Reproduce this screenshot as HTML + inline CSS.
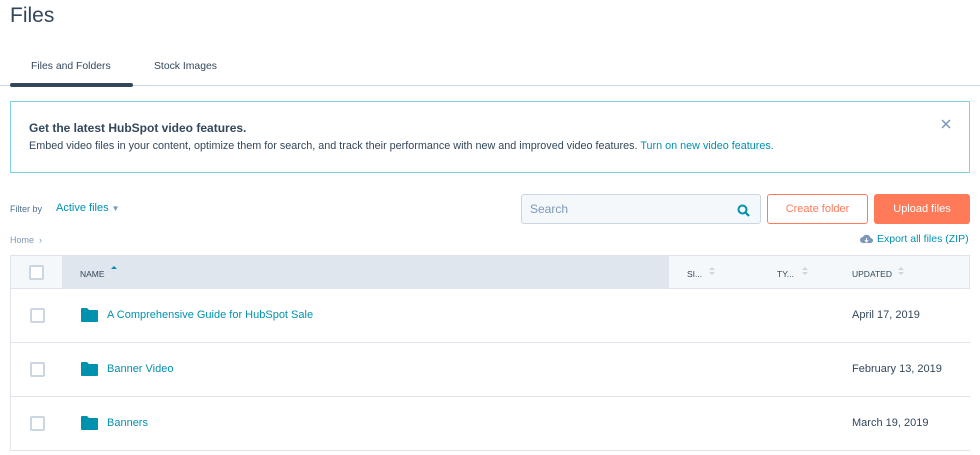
<!DOCTYPE html>
<html><head><meta charset="utf-8"><style>
*{box-sizing:border-box;margin:0;padding:0}
body{width:980px;height:455px;overflow:hidden;background:#fff;font-family:"Liberation Sans",sans-serif;color:#33475b;position:relative}
.a{position:absolute}
.t{font-size:11px}
.link{color:#0091ae}
.cb{position:absolute;width:15px;height:15px;border:2px solid #cbd6e2;border-radius:2px;background:#fff}
.row{position:absolute;left:10px;width:960px;height:54px;border-left:1px solid #dfe3eb;border-bottom:1px solid #dfe3eb}
.fold{position:absolute;left:70px;top:19px;width:17px;height:14px}
.name{position:absolute;left:96px;top:20px;font-size:11px;color:#0091ae}
.date{position:absolute;left:841px;top:20px;font-size:11px}
</style></head><body>
<div class="a" style="left:10px;top:4px;font-size:21px;color:#33475b">Files</div>
<div class="a" style="left:31px;top:61px;font-size:10.4px">Files and Folders</div>
<div class="a" style="left:154px;top:61px;font-size:10.4px">Stock Images</div>
<div class="a" style="left:0;top:85px;width:980px;height:1px;background:#cbd6e2"></div>
<div class="a" style="left:10px;top:83px;width:123px;height:4px;border-radius:2px;background:#33475b"></div>

<div class="a" style="left:10px;top:101px;width:960px;height:72px;border:1px solid #7fd1de;background:#fff"></div>
<div class="a" style="left:29px;top:121px;font-size:12px;font-weight:bold">Get the latest HubSpot video features.</div>
<div class="a" style="left:29px;top:140px;font-size:10.8px">Embed video files in your content, optimize them for search, and track their performance with new and improved video features. <span class="link">Turn on new video features.</span></div>
<svg class="a" style="left:941px;top:119px" width="10" height="10"><path d="M1 1L9 9M9 1L1 9" stroke="#7c98b6" stroke-width="1.5"/></svg>

<div class="a" style="left:10px;top:204px;font-size:9px;color:#516f90">Filter by</div>
<div class="a link" style="left:56px;top:202px;font-size:11px">Active files <span style="font-size:8px;color:#7c98b6">▼</span></div>

<div class="a" style="left:521px;top:194px;width:240px;height:30px;border:1px solid #cbd6e2;border-radius:3px;background:#f5f8fa"></div>
<div class="a" style="left:530px;top:202px;font-size:12px;color:#7c98b6">Search</div>
<svg class="a" style="left:737px;top:204px" width="13" height="13"><circle cx="5.5" cy="5.5" r="4" fill="none" stroke="#0091ae" stroke-width="2"/><path d="M8.5 8.5L12 12" stroke="#0091ae" stroke-width="2.2"/></svg>
<div class="a" style="left:767px;top:194px;width:101px;height:30px;border:1px solid #ff7a59;border-radius:3px;background:#fff;color:#ff7a59;font-size:11px;text-align:center;line-height:28px">Create folder</div>
<div class="a" style="left:874px;top:194px;width:96px;height:30px;border-radius:3px;background:#ff7a59;color:#fff;font-size:11px;text-align:center;line-height:30px">Upload files</div>

<div class="a" style="left:10px;top:235px;font-size:9px;color:#7c98b6">Home &nbsp;›</div>
<svg class="a" style="left:860px;top:234px" width="13" height="10"><path d="M3 9a3 3 0 0 1 0-6 4 4 0 0 1 7.5 1A2.5 2.5 0 0 1 10.5 9z" fill="#7c98b6"/><path d="M6.5 4v4M4.8 6.2L6.5 8l1.7-1.8" stroke="#fff" stroke-width="1" fill="none"/></svg>
<div class="a link" style="left:877px;top:233px;font-size:10.5px">Export all files (ZIP)</div>

<div class="a" style="left:10px;top:255px;width:960px;height:34px;background:#f5f8fa;border:1px solid #dfe3eb"></div>
<div class="a" style="left:62px;top:256px;width:607px;height:33px;background:#dfe6ee"></div>
<div class="cb" style="left:29px;top:265px"></div>
<div class="a" style="left:80px;top:269px;font-size:8.5px;color:#33475b">NAME</div>
<svg class="a" style="left:111px;top:265px" width="6" height="10"><path d="M0 4L3 1L6 4z" fill="#0091ae"/><path d="M0 6L3 9L6 6z" fill="#dfe3eb"/></svg>
<div class="a" style="left:687px;top:269px;font-size:8.5px">SI...</div>
<svg class="a" style="left:709px;top:266px" width="6" height="10"><path d="M0 4L3 1L6 4zM0 6L3 9L6 6z" fill="#cbd6e2"/></svg>
<div class="a" style="left:777px;top:269px;font-size:8.5px">TY...</div>
<svg class="a" style="left:802px;top:266px" width="6" height="10"><path d="M0 4L3 1L6 4zM0 6L3 9L6 6z" fill="#cbd6e2"/></svg>
<div class="a" style="left:852px;top:269px;font-size:8.5px">UPDATED</div>
<svg class="a" style="left:898px;top:266px" width="6" height="10"><path d="M0 4L3 1L6 4zM0 6L3 9L6 6z" fill="#cbd6e2"/></svg>

<div class="row" style="top:289px"><div class="cb" style="left:19px;top:19px"></div><svg class="fold" viewBox="0 0 17 14"><path d="M1 0h5l2 2h8a1 1 0 0 1 1 1v10a1 1 0 0 1-1 1H1a1 1 0 0 1-1-1V1a1 1 0 0 1 1-1z" fill="#0091ae"/></svg><div class="name">A Comprehensive Guide for HubSpot Sale</div><div class="date">April 17, 2019</div></div>
<div class="row" style="top:343px"><div class="cb" style="left:19px;top:19px"></div><svg class="fold" viewBox="0 0 17 14"><path d="M1 0h5l2 2h8a1 1 0 0 1 1 1v10a1 1 0 0 1-1 1H1a1 1 0 0 1-1-1V1a1 1 0 0 1 1-1z" fill="#0091ae"/></svg><div class="name">Banner Video</div><div class="date">February 13, 2019</div></div>
<div class="row" style="top:397px"><div class="cb" style="left:19px;top:19px"></div><svg class="fold" viewBox="0 0 17 14"><path d="M1 0h5l2 2h8a1 1 0 0 1 1 1v10a1 1 0 0 1-1 1H1a1 1 0 0 1-1-1V1a1 1 0 0 1 1-1z" fill="#0091ae"/></svg><div class="name">Banners</div><div class="date">March 19, 2019</div></div>
</body></html>
